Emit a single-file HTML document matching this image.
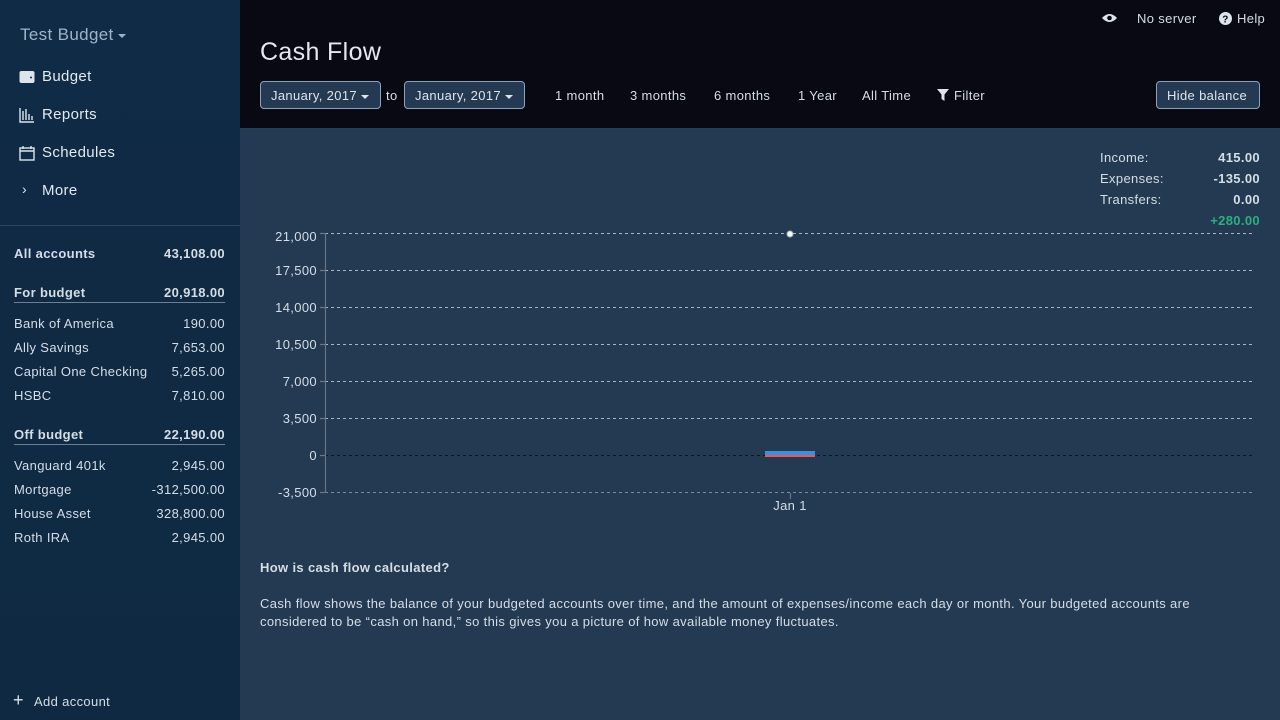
<!DOCTYPE html>
<html><head><meta charset="utf-8"><style>
*{box-sizing:border-box;margin:0;padding:0}
body{width:1280px;height:720px;overflow:hidden;font-family:"Liberation Sans",sans-serif;font-size:13px;color:#d5dde6;background:#243a52;position:relative;letter-spacing:0.35px}
.sb{position:absolute;left:0;top:0;width:240px;height:720px;background:linear-gradient(#102b46,#0f2942)}
.a{position:absolute;white-space:nowrap}
.hd{position:absolute;left:240px;top:0;width:1040px;height:129px;background:#080912;border-bottom:1px solid #2b3c50}
.btn{position:absolute;border:1px solid #8fa2b8;border-radius:4px;background:#243a52;color:#dde4ec;font-size:13px;padding:0 10px;height:28px;line-height:28px}
.nav{position:absolute;left:42px;font-size:15px;color:#e4e9ef}
.row{position:absolute;left:14px;width:211px;display:flex;justify-content:space-between;font-size:13px;color:#d5dde6}
.b{font-weight:bold}
.tri{display:inline-block;border-left:4px solid transparent;border-right:4px solid transparent;border-top:4px solid currentColor;vertical-align:middle;margin-left:4px}
</style></head><body>
<div class="sb">
<div class="a" style="left:20px;top:25px;font-size:17px;color:#9fb3c8">Test Budget<span class="tri"></span></div>
<svg class="a" style="left:19px;top:70px" width="16" height="14"><rect x="0.5" y="1" width="15" height="12" rx="2" fill="#dde4ec"/><circle cx="12" cy="7.5" r="1" fill="#102b46"/></svg>
<div class="nav" style="top:68px">Budget</div>
<svg class="a" style="left:19px;top:107px" width="16" height="16" stroke="#dde4ec" stroke-width="1.4" fill="none"><path d="M1 1V15H15M4 13V4M7 13V2M10 13V7M13 13V9"/></svg>
<div class="nav" style="top:106px">Reports</div>
<svg class="a" style="left:19px;top:145px" width="16" height="16" stroke="#dde4ec" stroke-width="1.4" fill="none"><rect x="1" y="3" width="14" height="12"/><path d="M1 6H15M4 1V4M12 1V4"/></svg>
<div class="nav" style="top:144px">Schedules</div>
<div class="a" style="left:22px;top:181px;font-size:14px;color:#dde4ec">›</div>
<div class="nav" style="top:182px">More</div>
<div class="a" style="left:0;top:225px;width:240px;height:1px;background:#2d4560"></div>
<div class="row b" style="top:246px"><span>All accounts</span><span>43,108.00</span></div>
<div class="row b" style="top:285px;border-bottom:1px solid #6a7f96;padding-bottom:2px"><span>For budget</span><span>20,918.00</span></div>
<div class="row" style="top:316px"><span>Bank of America</span><span>190.00</span></div>
<div class="row" style="top:340px"><span>Ally Savings</span><span>7,653.00</span></div>
<div class="row" style="top:364px"><span>Capital One Checking</span><span>5,265.00</span></div>
<div class="row" style="top:388px"><span>HSBC</span><span>7,810.00</span></div>
<div class="row b" style="top:427px;border-bottom:1px solid #6a7f96;padding-bottom:2px"><span>Off budget</span><span>22,190.00</span></div>
<div class="row" style="top:458px"><span>Vanguard 401k</span><span>2,945.00</span></div>
<div class="row" style="top:482px"><span>Mortgage</span><span>-312,500.00</span></div>
<div class="row" style="top:506px"><span>House Asset</span><span>328,800.00</span></div>
<div class="row" style="top:530px"><span>Roth IRA</span><span>2,945.00</span></div>
<div class="a" style="left:13px;top:690px;font-size:18px;color:#dde4ec;line-height:20px">+</div>
<div class="a" style="left:34px;top:694px">Add account</div>
</div>
<div class="hd">
<svg class="a" style="left:862px;top:13px" width="15" height="10"><path d="M0 5Q7.5-3 15 5Q7.5 13 0 5Z" fill="#dde4ec"/><circle cx="7.5" cy="5" r="2.3" fill="#080912"/></svg>
<div class="a" style="left:897px;top:11px">No server</div>
<svg class="a" style="left:979px;top:12px" width="13" height="13"><circle cx="6.5" cy="6.5" r="6.5" fill="#dde4ec"/><text x="6.5" y="10.5" font-size="10" font-weight="bold" text-anchor="middle" fill="#080912" font-family="Liberation Sans">?</text></svg>
<div class="a" style="left:997px;top:11px">Help</div>
<div class="a" style="left:20px;top:38px;font-size:25px;color:#e4e9ef">Cash Flow</div>
<div class="btn" style="left:20px;top:81px;width:121px">January, 2017<span class="tri"></span></div>
<div class="a" style="left:146px;top:88px">to</div>
<div class="btn" style="left:164px;top:81px;width:121px">January, 2017<span class="tri"></span></div>
<div class="a" style="left:315px;top:88px">1 month</div>
<div class="a" style="left:390px;top:88px">3 months</div>
<div class="a" style="left:474px;top:88px">6 months</div>
<div class="a" style="left:558px;top:88px">1 Year</div>
<div class="a" style="left:622px;top:88px">All Time</div>
<svg class="a" style="left:697px;top:89px" width="12" height="12"><path d="M0 0H12L7.5 5.5V12L4.5 10V5.5Z" fill="#dde4ec"/></svg>
<div class="a" style="left:714px;top:88px">Filter</div>
<div class="btn" style="left:916px;top:81px;width:104px">Hide balance</div>
</div>
<div class="a" style="left:1100px;top:150px">Income:</div><div class="a b" style="right:20px;top:150px">415.00</div>
<div class="a" style="left:1100px;top:171px">Expenses:</div><div class="a b" style="right:20px;top:171px">-135.00</div>
<div class="a" style="left:1100px;top:192px">Transfers:</div><div class="a b" style="right:20px;top:192px">0.00</div>
<div class="a b" style="right:20px;top:213px;color:#2bb07f">+280.00</div>
<svg class="a" style="left:240px;top:220px" width="1040" height="300" font-family="Liberation Sans" font-size="13" fill="#d5dde6">
<g stroke="#aab4c0" stroke-dasharray="3,3" stroke-width="1">
<path d="M85 13.5H1013M85 50.5H1013M85 87.5H1013M85 124.5H1013M85 161.5H1013M85 198.5H1013"/>
</g>
<path d="M85 272.5H1013" stroke="#7f8a96" stroke-dasharray="3,3"/>
<path d="M85 235.5H1013" stroke="#0d1620" stroke-dasharray="3,3"/>
<path d="M85.5 13V273M80 13.5H85M80 50.5H85M80 87.5H85M80 124.5H85M80 161.5H85M80 198.5H85M80 235.5H85M80 272.5H85M550.5 273V279" stroke="#6b7580" stroke-width="1.2"/>
<rect x="525" y="231" width="50" height="4" fill="#3b8fdc"/>
<rect x="525" y="235" width="50" height="2" fill="#e85a5a"/>
<circle cx="550" cy="14" r="3" fill="#fff" stroke="#9fb3c8"/>
<g text-anchor="end"><text x="77" y="21">21,000</text><text x="77" y="55">17,500</text><text x="77" y="92">14,000</text><text x="77" y="129">10,500</text><text x="77" y="166">7,000</text><text x="77" y="203">3,500</text><text x="77" y="240">0</text><text x="77" y="277">-3,500</text></g>
<text x="550" y="290" text-anchor="middle">Jan 1</text>
</svg>
<div class="a b" style="left:260px;top:560px">How is cash flow calculated?</div>
<div class="a" style="left:260px;top:595px;width:1000px;white-space:normal;line-height:18px">Cash flow shows the balance of your budgeted accounts over time, and the amount of expenses/income each day or month. Your budgeted accounts are considered to be “cash on hand,” so this gives you a picture of how available money fluctuates.</div>
</body></html>
